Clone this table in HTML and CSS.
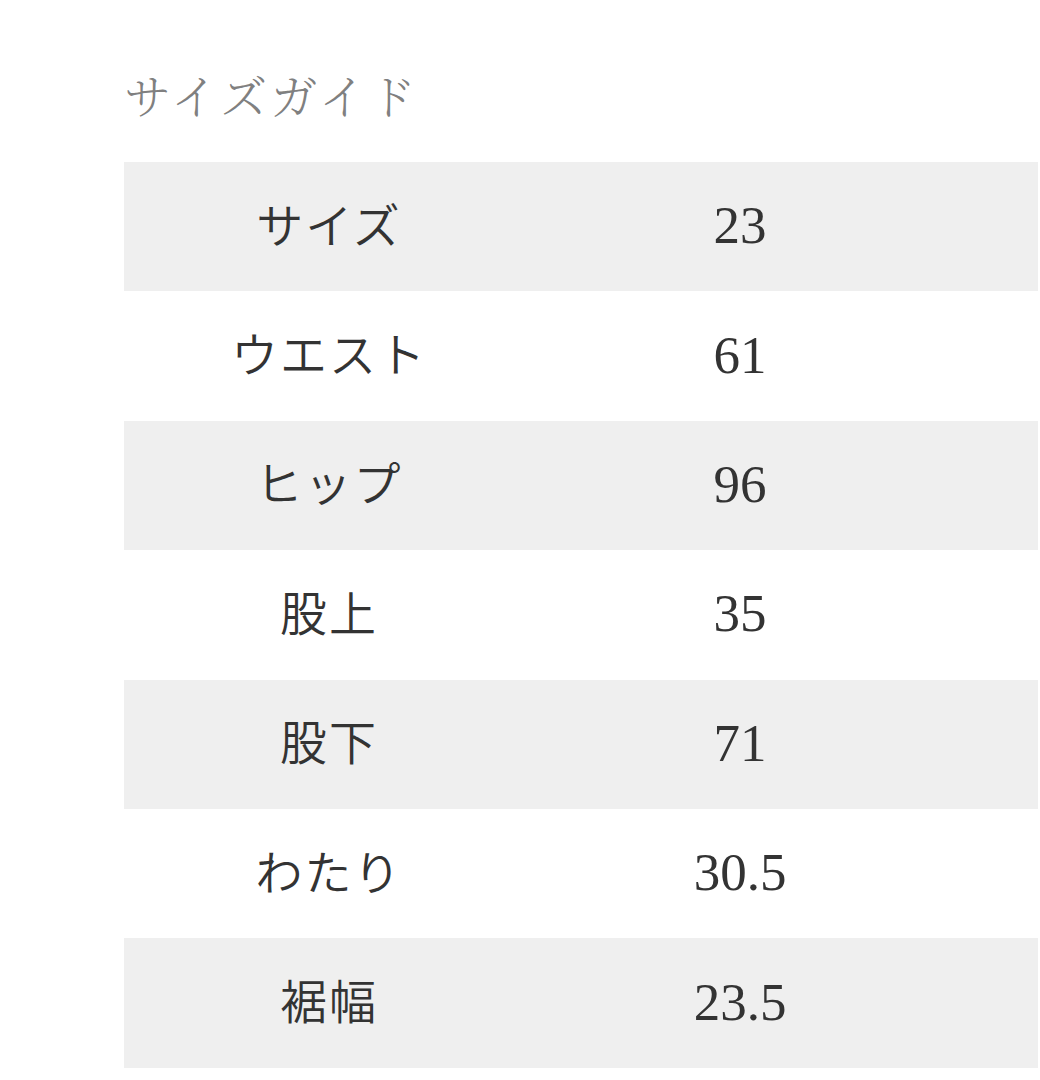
FILE: index.html
```html
<!DOCTYPE html>
<html lang="ja">
<head>
<meta charset="utf-8">
<link rel="stylesheet" href="styles.css">
</head>
<body>
<main class="page">
  <h1 class="title">サイズガイド</h1>
  <div class="table">
    <div class="row shaded"><div class="label">サイズ</div><div class="value">23</div><div></div></div>
    <div class="row"><div class="label">ウエスト</div><div class="value">61</div><div></div></div>
    <div class="row shaded"><div class="label">ヒップ</div><div class="value">96</div><div></div></div>
    <div class="row"><div class="label">股上</div><div class="value">35</div><div></div></div>
    <div class="row shaded"><div class="label">股下</div><div class="value">71</div><div></div></div>
    <div class="row"><div class="label">わたり</div><div class="value">30.5</div><div></div></div>
    <div class="row shaded"><div class="label">裾幅</div><div class="value">23.5</div><div></div></div>
  </div>
</main>
</body>
</html>
```
FILE: styles.css
```css
html, body {
  margin: 0;
  padding: 0;
  background: #ffffff;
}
.page {
  padding: 0 2px 0 124px;
}
.title {
  margin: 0;
  height: 162px;
  box-sizing: border-box;
  padding-top: 66px;
  font-family: "Noto Serif CJK JP", "Noto Sans CJK JP", serif;
  font-weight: 300;
  font-size: 47px;
  line-height: 56px;
  color: #808080;
  letter-spacing: 3px;
}
.table {
  display: flex;
  flex-direction: column;
}
.row {
  display: grid;
  grid-template-columns: 410px 412px 1fr;
  align-items: center;
  height: 129.4px;
  background: #ffffff;
}
.row.shaded {
  background: #efefef;
}
.label {
  text-align: center;
  font-family: "Noto Sans CJK JP", sans-serif;
  font-weight: 350;
  font-size: 47px;
  line-height: 56px;
  color: #333333;
  letter-spacing: 2px;
  padding-bottom: 8px;
}
.value {
  text-align: center;
  font-family: "Liberation Serif", "Times New Roman", serif;
  font-size: 53px;
  line-height: 56px;
  color: #333333;
  padding-bottom: 3px;
}
```
